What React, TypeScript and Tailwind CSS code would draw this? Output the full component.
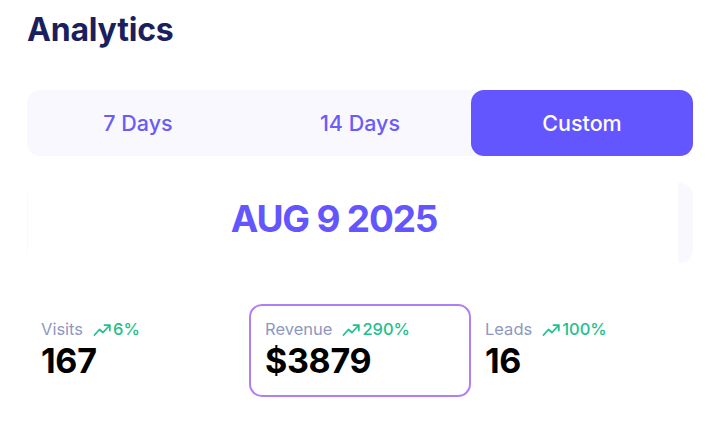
import React from "react";

function Trend() {
  return (
    <svg width="19" height="14" viewBox="0 0 19 14" fill="none" stroke="#22c08c" strokeWidth="1.8" strokeLinecap="round" strokeLinejoin="round">
      <path d="M1.5 12 L6.5 6.5 L10 9.5 L16.5 2.5" />
      <path d="M11.5 2.2 H16.8 V7.5" />
    </svg>
  );
}

function Stat({ label, pct, value, active }: { label: string; pct: string; value: string; active?: boolean }) {
  return (
    <div
      className={`flex flex-col rounded-[13px] px-[14px] ${
        active ? "border-2 border-[#b17ef7] pt-[11px] pb-[14px]" : "pt-[13px] pb-[16px]"
      }`}
    >
      <div className="flex items-center h-[24px]">
        <span className="text-[16.5px] text-[#8e98bf]">{label}</span>
        <span className="ml-[10px] mr-[1px] mt-[1px]">
          <Trend />
        </span>
        <span className="text-[16.5px] font-medium text-[#22c08c]">{pct}</span>
      </div>
      <div className="text-[34px] font-bold leading-[40px] text-black tracking-[-0.3px]">{value}</div>
    </div>
  );
}

export default function App() {
  return (
    <div className="w-[720px] h-[421px] bg-white overflow-hidden" style={{ fontFamily: "Inter, 'Noto Sans', sans-serif" }}>
      <div className="px-[27px]">
        <h1 className="pt-[10px] text-[32px] font-bold leading-[40px] text-[#1b1f5d] tracking-[-0.2px]">Analytics</h1>
        <div className="mt-[40px] grid grid-cols-3 h-[66px] rounded-[13px] bg-[#f9f8ff]">
          <div className="flex items-center justify-center text-[21.5px] font-medium text-[#6b5cf6]">7 Days</div>
          <div className="flex items-center justify-center text-[21.5px] font-medium text-[#6b5cf6]">14 Days</div>
          <div className="flex items-center justify-center rounded-[13px] bg-[#6356fe] text-[21.5px] font-medium text-white">
            Custom
          </div>
        </div>
        <div className="mt-[27px] h-[80px] rounded-[13px] bg-[#f9f8ff] flex overflow-hidden">
          <div className="ml-[1px] w-[650px] bg-white flex items-center justify-center pr-[38px]">
            <span className="text-[37px] font-bold text-[#6356fe] tracking-[-1.2px] mt-[-8px]">AUG 9 2025</span>
          </div>
        </div>
        <div className="mt-[41px] grid grid-cols-3">
          <Stat label="Visits" pct="6%" value="167" />
          <Stat label="Revenue" pct="290%" value="$3879" active />
          <Stat label="Leads" pct="100%" value="16" />
        </div>
      </div>
    </div>
  );
}
